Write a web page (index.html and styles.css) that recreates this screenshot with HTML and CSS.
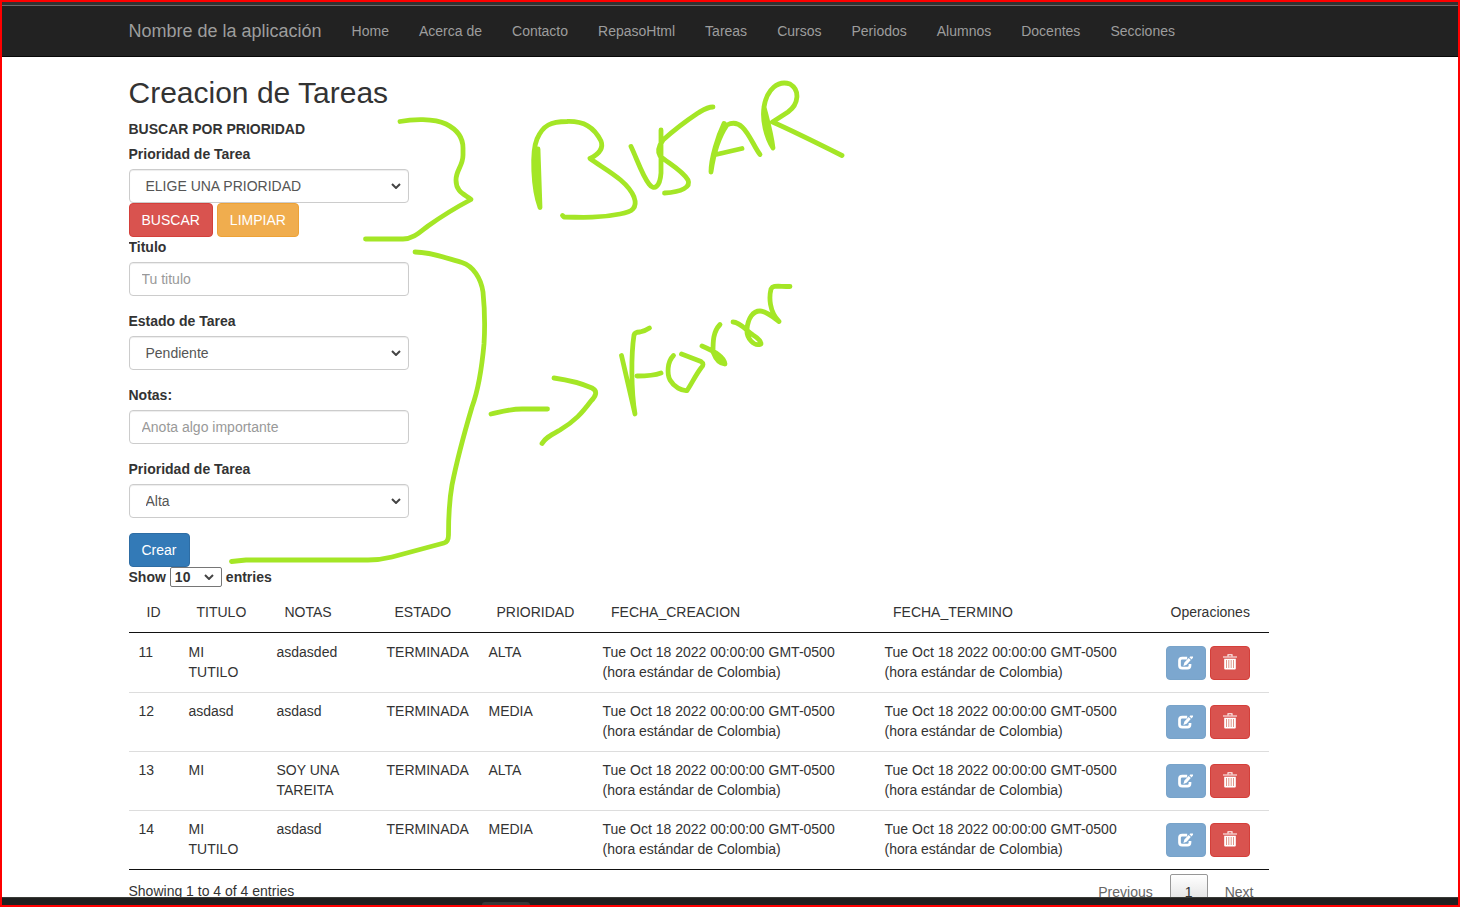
FILE: index.html
```
<!DOCTYPE html>
<html lang="es">
<head>
<meta charset="utf-8">
<title>Creacion de Tareas</title>
<link rel="stylesheet" href="styles.css">
</head>
<body>
<svg class="defs" aria-hidden="true">
  <symbol id="i-edit" viewBox="0 0 15 14">
    <path d="M9.2 2.2H4.2Q1.500 2.200 1.500 4.800V9.600Q1.500 12.200 4.200 12.200H9.400Q12 12.200 12 9.600V8" fill="none" stroke="#fff" stroke-width="2.700"/>
    <path d="M5.400 10 6.400 6.400 10.700 2 12.800 4.100 8.600 8.700ZM11.400 1.300 12.300 .5H15V1.800L13.500 3.400Z" fill="#fff"/>
  </symbol>
  <symbol id="i-trash" viewBox="0 0 14 16">
    <path d="M5 2.500V.8H9V2.500" fill="none" stroke="#fff" stroke-width="1.100"/>
    <path d="M0 2.500H14V3.600H0ZM1.200 4.700H12.800V14.400Q12.800 15.400 11.800 15.400H2.200Q1.200 15.400 1.200 14.400Z" fill="#fff"/>
    <path d="M3.500 6V14M5.800 6V14M8.200 6V14M10.500 6V14" stroke="#dc8c7e" stroke-width=".9"/>
  </symbol>
  <symbol id="i-down" viewBox="0 0 10 6">
    <path d="M1 1 5 5 9 1" fill="none" stroke="currentColor" stroke-width="2"/>
  </symbol>
</svg>
<div class="screen">
  <div class="top-strip"></div>
  <nav class="navbar">
    <a class="brand">Nombre de la aplicación</a>
    <a>Home</a><a>Acerca de</a><a>Contacto</a><a>RepasoHtml</a><a>Tareas</a><a>Cursos</a><a>Periodos</a><a>Alumnos</a><a>Docentes</a><a>Secciones</a>
  </nav>
  <main class="content">
    <h2>Creacion de Tareas</h2>
    <label>BUSCAR POR PRIORIDAD</label>
    <label>Prioridad de Tarea</label>
    <div class="pick"><select class="field"><option>ELIGE UNA PRIORIDAD</option></select><svg><use href="#i-down"/></svg></div>
    <div class="actions"><button class="btn danger">BUSCAR</button><button class="btn warning">LIMPIAR</button></div>
    <div class="group"><label>Titulo</label><input class="field" placeholder="Tu titulo"></div>
    <div class="group"><label>Estado de Tarea</label><div class="pick"><select class="field"><option>Pendiente</option></select><svg><use href="#i-down"/></svg></div></div>
    <div class="group"><label>Notas:</label><input class="field" placeholder="Anota algo importante"></div>
    <div class="group"><label>Prioridad de Tarea</label><div class="pick"><select class="field"><option>Alta</option></select><svg><use href="#i-down"/></svg></div></div>
    <button class="btn primary">Crear</button>
    <div class="length">Show <div class="pick small"><select><option>10</option></select><svg><use href="#i-down"/></svg></div> entries</div>
    <table>
      <colgroup><col class="c1"><col class="c2"><col class="c3"><col class="c4"><col class="c5"><col class="c6"><col class="c7"><col class="c8"></colgroup>
      <thead><tr><th>ID</th><th>TITULO</th><th>NOTAS</th><th>ESTADO</th><th>PRIORIDAD</th><th class="date">FECHA_CREACION</th><th class="date">FECHA_TERMINO</th><th class="ops">Operaciones</th></tr></thead>
      <tbody>
        <tr><td>11</td><td>MI<br>TUTILO</td><td>asdasded</td><td>TERMINADA</td><td>ALTA</td><td>Tue Oct 18 2022 00:00:00 GMT-0500<br>(hora estándar de Colombia)</td><td>Tue Oct 18 2022 00:00:00 GMT-0500<br>(hora estándar de Colombia)</td><td><div class="tools"><button class="btn edit"><svg><use href="#i-edit"/></svg></button><button class="btn danger trash"><svg><use href="#i-trash"/></svg></button></div></td></tr>
        <tr><td>12</td><td>asdasd</td><td>asdasd</td><td>TERMINADA</td><td>MEDIA</td><td>Tue Oct 18 2022 00:00:00 GMT-0500<br>(hora estándar de Colombia)</td><td>Tue Oct 18 2022 00:00:00 GMT-0500<br>(hora estándar de Colombia)</td><td><div class="tools"><button class="btn edit"><svg><use href="#i-edit"/></svg></button><button class="btn danger trash"><svg><use href="#i-trash"/></svg></button></div></td></tr>
        <tr><td>13</td><td>MI</td><td>SOY UNA<br>TAREITA</td><td>TERMINADA</td><td>ALTA</td><td>Tue Oct 18 2022 00:00:00 GMT-0500<br>(hora estándar de Colombia)</td><td>Tue Oct 18 2022 00:00:00 GMT-0500<br>(hora estándar de Colombia)</td><td><div class="tools"><button class="btn edit"><svg><use href="#i-edit"/></svg></button><button class="btn danger trash"><svg><use href="#i-trash"/></svg></button></div></td></tr>
        <tr><td>14</td><td>MI<br>TUTILO</td><td>asdasd</td><td>TERMINADA</td><td>MEDIA</td><td>Tue Oct 18 2022 00:00:00 GMT-0500<br>(hora estándar de Colombia)</td><td>Tue Oct 18 2022 00:00:00 GMT-0500<br>(hora estándar de Colombia)</td><td><div class="tools"><button class="btn edit"><svg><use href="#i-edit"/></svg></button><button class="btn danger trash"><svg><use href="#i-trash"/></svg></button></div></td></tr>
      </tbody>
    </table>
    <div class="table-foot">
      <span class="info">Showing 1 to 4 of 4 entries</span>
      <div class="pager"><span>Previous</span><span class="current">1</span><span>Next</span></div>
    </div>
  </main>
  <div class="taskbar"><i></i></div>
</div>
<svg class="ink" viewBox="0 0 1460 907">
  <!-- upper brace -->
  <path d="M400 121.500C412 119 434 118 446 124C456 129 463 137 463 148V155C463 166 456 170 456 180C456 192 464 194 471 199.500C455 208 442 216 428 226C420 232 413 239 403 239H365.500"/>
  <!-- lower brace -->
  <path d="M415 252C431 252 446 258 462 262.500C473 266 481 278 483 292C485 312 485 328 484 344C482 366 479 388 472 407C464 434 457 460 452 485C449 502 448.500 520 448.500 535C448.500 539 448 542 444 543L392 557Q380 560 368 560H246L231.500 561.500"/>
  <!-- BUSAR -->
  <path d="M538 149 540 207.500C533 188 531.500 152 537 139C543 125 551 121.500 567 121.500C584 121 594 127 601 141C604 149 597 155 590 158.500C604 169 627 180 634 197C638 208 632 212 620 214C601 218 583 217.500 564 217L562.500 215.500M536 150 537 190"/>
  <path d="M631 146.500C637 159 642 175 649 184C654 191 660 187 661 173V130M713 107C707 107 703 110 698 113C686 121 673 131 663 140Q656 150 660 156C668 163 682 170 688 180C691 187 682 192 664.500 193"/>
  <path d="M711 172C711 158 718 136 724 123.500M711 172C713 158 718 138 727 125C744 116 751 143 760 154.500M714 155 742 148.500"/>
  <path d="M764 107C767 89 778 80 790 84C800 90 799 104 788 112L772.500 122C793 131 819 144 842 155.500M764 107C762 120 766 137 773 148C771 132 767 119 764 107M766 118 770 138"/>
  <!-- arrow -->
  <path d="M491 414C504 411 510 409 522 409H547.500M554 378C568 380 583 384 592 388C598 391 596 396 591 401C582 413 575 421 560 430C551 435 545 438 542 443.500"/>
  <!-- Form -->
  <path d="M621.500 355.500 635 414C631 390 631 355 634 335Q635 332 640 332 645 331 649.500 328M637 376C646 376 653 376 661 373"/>
  <path d="M673.500 355.500C667 362 667 374 670 380C674 387 682 391 687 390.500C691 385 695 376 701 368Q705 364 701 361.500L681.500 354"/>
  <path d="M720 324.500C713 332 713 341 713 352C716 360 720 364 725 364C724 357 716 352 702 346M715 353 724 362"/>
  <path d="M733 322C740 322 747 331 753 335Q761 340 761 344C754 347 746 338 747 329C748 318 753 311 760 311C766 311 773 317 779 321.500C769 311 769 297 771 289C773 285 777 286.500 790 286.500"/>
</svg>
</body>
</html>
```
FILE: styles.css
```
* { box-sizing: border-box; }
body { margin: 0; font: 14px/20px Arial, "Liberation Sans", sans-serif; color: #333; background: #fff; }
.defs { position: absolute; width: 0; height: 0; }
.screen { height: 907px; border: 2px solid #fe0000; overflow: hidden; display: flex; flex-direction: column; }
.top-strip { height: 4px; flex: none; background: #333; border-bottom: 1px solid #6b6b6b; }
.navbar { height: 51px; flex: none; background: #222; border-bottom: 1px solid #080808; display: flex; padding-left: 111.5px; color: #9d9d9d; }
.navbar a { padding: 15px; }
.navbar .brand { font-size: 18px; }
.content { flex: 1; min-height: 0; overflow: hidden; width: 1140px; margin-left: 126.5px; }
h2 { font-size: 30px; line-height: 33px; font-weight: 400; margin: 19px 0 10px; }
label { display: block; font-weight: 700; margin-bottom: 5px; }
.field { display: block; width: 280px; height: 34px; padding: 6px 12px; border: 1px solid #ccc; border-radius: 4px; background: #fff; color: #555; font: inherit; box-shadow: inset 0 1px 1px rgba(0,0,0,.075); }
.field::placeholder { color: #999; opacity: 1; }
.pick { position: relative; width: 280px; color: #444; }
.pick select { appearance: none; }
.pick .field { padding-left: 16px; }
.pick svg { position: absolute; right: 8px; top: 14px; width: 10px; height: 6px; pointer-events: none; }
.actions { display: flex; gap: 4px; }
.group { margin-bottom: 15px; }
.btn { display: block; height: 34px; border: 1px solid; border-radius: 4px; padding: 6px 12px; color: #fff; font: inherit; }
.danger { background: #d9534f; border-color: #d43f3a; }
.warning { background: #f0ad4e; border-color: #eea236; }
.primary { background: #337ab7; border-color: #2e6da4; }
.length { height: 25px; font-weight: 700; display: flex; align-items: flex-start; gap: 4px; }
.small { width: 52px; }
.small select { display: block; width: 52px; height: 20px; font: inherit; line-height: 18px; color: #333; background: #fff; border: 1px solid #767676; border-radius: 2px; padding: 0 0 0 4px; }
.small svg { right: 8px; top: 7px; }
table { width: 1140px; table-layout: fixed; border-collapse: separate; border-spacing: 0; border-bottom: 1px solid #111; }
.c1 { width: 50px; } .c2 { width: 88px; } .c3 { width: 110px; } .c4 { width: 102px; } .c5 { width: 114px; } .c6 { width: 282px; } .c7 { width: 281px; } .c8 { width: 113px; }
th { height: 41px; padding: 10px 0 10px 18px; border-bottom: 1px solid #111; font-weight: 400; text-align: left; white-space: nowrap; }
th.date { padding-left: 18.5px; }
th.ops { padding-left: 15px; }
td { height: 59px; vertical-align: top; padding: 8px 0 0 10px; border-top: 1px solid #ddd; white-space: nowrap; }
tr:first-child td { border-top-color: transparent; }
.tools { display: flex; gap: 4px; padding-top: 4px; }
.tools .btn { width: 40px; padding: 0; display: grid; place-items: center; }
.edit { background: #7ca7cf; border-color: #78a3c9; }
.edit svg { width: 15px; height: 14px; }
.trash svg { width: 14px; height: 16px; margin: 0 0 2px 1px; }
.table-foot { display: flex; justify-content: space-between; padding-top: 4px; }
.info { padding-top: 7px; }
.pager { display: flex; color: #666; padding-right: 15px; }
.pager span { padding-top: 8px; }
.pager .current { width: 38px; height: 34px; margin: 0 17px; padding-top: 7px; border: 1px solid #979797; border-radius: 2px; background: linear-gradient(#fff, #dcdcdc); text-align: center; color: #333; }
.taskbar { height: 8px; flex: none; background: #202020; border-top: 1px solid #3a3c38; padding: 4px 0 0 480px; }
.taskbar i { display: block; width: 48px; height: 3px; background: #383838; border-radius: 3px 3px 0 0; }
.ink { position: absolute; left: 0; top: 0; width: 1460px; height: 907px; pointer-events: none; fill: none; stroke: #a4e626; stroke-width: 4.8; stroke-linecap: round; stroke-linejoin: round; }
```
